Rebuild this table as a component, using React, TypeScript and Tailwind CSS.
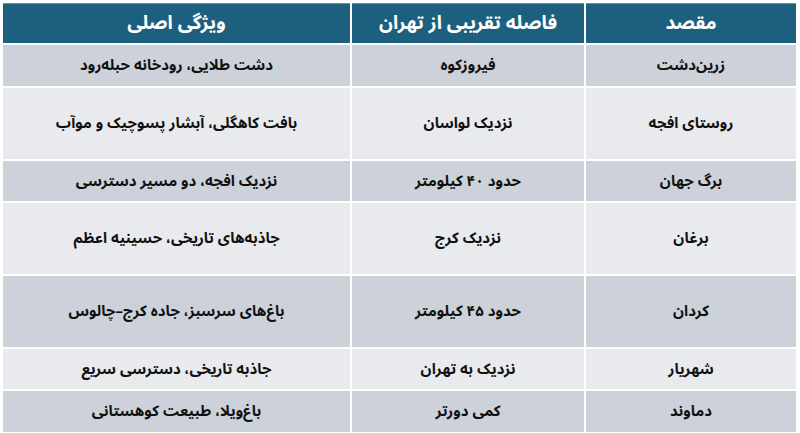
import React from "react";

const rows: { h: string; bg: string; c: [string, string, string] }[] = [
  { h: "h-[41px]", bg: "bg-[#cdd1da]", c: ["زرین‌دشت", "فیروزکوه", "دشت طلایی، رودخانه حبله‌رود"] },
  { h: "h-[71px]", bg: "bg-[#e8eaee]", c: ["روستای افجه", "نزدیک لواسان", "بافت کاهگلی، آبشار پسوچیک و موآب"] },
  { h: "h-[40px]", bg: "bg-[#cdd1da]", c: ["برگ جهان", "حدود ۴۰ کیلومتر", "نزدیک افجه، دو مسیر دسترسی"] },
  { h: "h-[71px]", bg: "bg-[#e8eaee]", c: ["برغان", "نزدیک کرج", "جاذبه‌های تاریخی، حسینیه اعظم"] },
  { h: "h-[71px]", bg: "bg-[#cdd1da]", c: ["کردان", "حدود ۴۵ کیلومتر", "باغ‌های سرسبز، جاده کرج–چالوس"] },
  { h: "h-[40px]", bg: "bg-[#e8eaee]", c: ["شهریار", "نزدیک به تهران", "جاذبه تاریخی، دسترسی سریع"] },
  { h: "h-[41px]", bg: "bg-[#cdd1da]", c: ["دماوند", "کمی دورتر", "باغ‌ویلا، طبیعت کوهستانی"] },
];

const headers = ["مقصد", "فاصله تقریبی از تهران", "ویژگی اصلی"];

export default function App() {
  return (
    <div
      dir="rtl"
      className="w-[800px] h-[433px] bg-white pt-[3px] pr-[4px] pl-[3px] overflow-hidden"
      style={{ fontFamily: '"Noto Sans Arabic", "Noto Naskh Arabic", "DejaVu Sans", sans-serif' }}
    >
      <div className="grid grid-cols-[210px_232px_347px] gap-[2px]">
        {headers.map((t, i) => (
          <div
            key={i}
            className="h-[40px] bg-[#1c5f7f] border-t border-[#5e93ad] flex items-center justify-center text-white font-bold text-[19px]"
          >
            {t}
          </div>
        ))}
        {rows.map((r, ri) =>
          r.c.map((t, ci) => (
            <div
              key={ri + "-" + ci}
              className={`${r.h} ${r.bg} flex items-center justify-center text-[#111] font-bold text-[15px]`}
            >
              {t}
            </div>
          ))
        )}
      </div>
    </div>
  );
}
